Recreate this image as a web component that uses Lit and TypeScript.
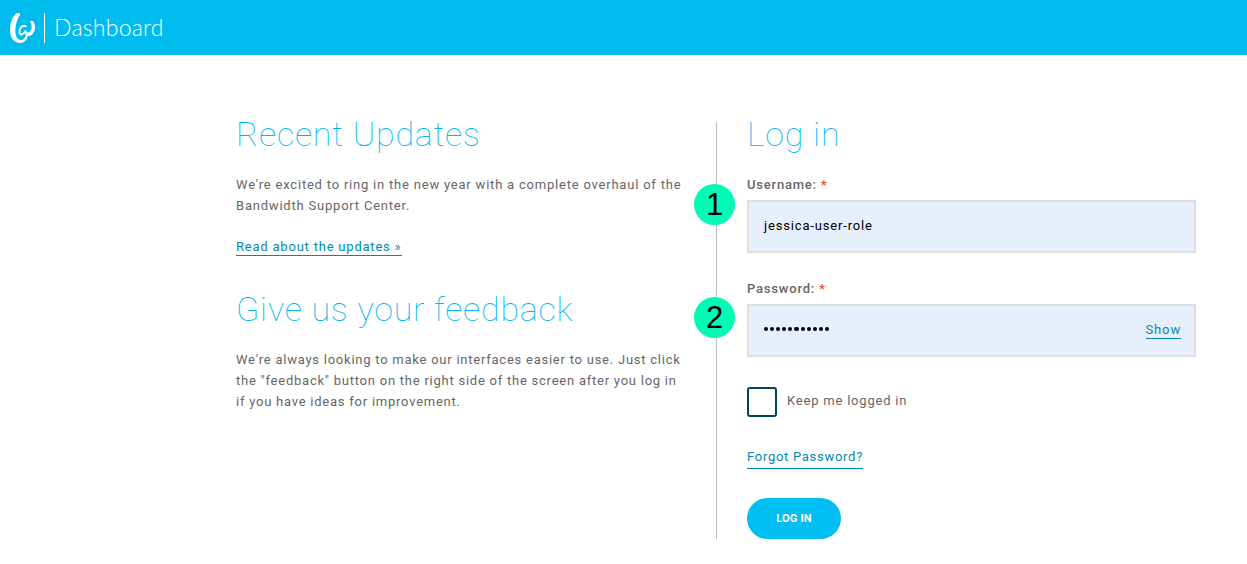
import { LitElement, html, css } from "lit";
import { customElement } from "lit/decorators.js";

@customElement("app-root")
export class AppRoot extends LitElement {
  static styles = css`
    :host {
      display: block;
      height: 564px;
      overflow: hidden;
      background: #fff;
      color: #666;
      font: 13px/21px Roboto, "Liberation Sans", sans-serif;
      letter-spacing: 0.79px;
    }
    * { box-sizing: border-box; }
    header {
      height: 55px;
      background: #00bcee;
      display: flex;
      align-items: center;
      color: #fff;
    }
    .logo { display: block; width: 44px; height: 55px; }
    .brand {
      height: 30px;
      border-left: 1px solid #fff;
      padding-left: 9px;
      font: 300 23px/29px Lato, sans-serif;
      letter-spacing: 0.25px;
    }
    main {
      display: grid;
      grid-template-columns: 480px 480px;
      margin: 67px 0 0 236px;
      height: 417px;
    }
    .login { border-left: 1px solid #bbb; padding-left: 30px; }
    h2 {
      margin: 0;
      height: 52px;
      font: 150 34px/25px Roboto, sans-serif;
      letter-spacing: 0.77px;
      color: #00b5ee;
      white-space: nowrap;
    }
    p { margin: 0 0 20px; white-space: nowrap; }
    p.tight { letter-spacing: 0.76px; }
    a {
      display: inline-block;
      color: #0089b0;
      border-bottom: 1px solid #0089b0;
      line-height: 17px;
    }
    .feedback { margin-top: 40px; }
    label { display: block; font-weight: 500; height: 26px; }
    .star { color: #e8542c; font-weight: 700; }
    .field {
      position: relative;
      width: 449px;
      height: 53px;
      border: 2px solid #dfdfdf;
      background: #e8effc;
      padding: 0 13px 2px 15px;
      display: flex;
      align-items: center;
      justify-content: space-between;
      color: #000;
      letter-spacing: 0.84px;
      margin-bottom: 25px;
    }
    .num {
      position: absolute;
      left: -55px;
      top: -18px;
      width: 41px;
      height: 41px;
      border-radius: 50%;
      background: #00fbb4;
      font: 31px/41px "Liberation Sans", sans-serif;
      letter-spacing: 0;
      text-align: center;
    }
    .num.second { top: -9px; }
    .dots { display: flex; gap: 2px; margin-bottom: 1px; }
    .dot { width: 4.1px; height: 4px; border-radius: 50%; background: #000; }
    .keep { display: flex; gap: 10px; margin-top: 30px; height: 30px; line-height: 27px; }
    .box { width: 30px; height: 30px; border: 2px solid #00465a; border-radius: 3px; }
    .forgot { display: block; width: 116px; margin-top: 29px; height: 23px; line-height: 21px; letter-spacing: 0.72px; white-space: nowrap; }
    button {
      display: block;
      width: 94px;
      height: 41px;
      margin-top: 29px;
      padding: 0;
      border: 0;
      border-radius: 21px;
      background: #00bdf2;
      color: #fff;
      font: 700 11px/41px Roboto, sans-serif;
      letter-spacing: 0.2px;
    }
  `;

  render() {
    return html`
      <header>
        <svg class="logo" viewBox="0 0 44 55" fill="none" stroke="#fff" stroke-linecap="round" stroke-linejoin="round">
          <path fill="#fff" stroke="none" d="M16 13.600C17.500 12.600 21 13 20 15C16.300 20 14.500 29 15.800 35C16.800 39.500 20.500 41 23 39.500C25.300 38 26 35.500 25.800 33L27.700 33C28 37 26.800 40.500 23.500 42.200C19 44.200 13.500 42 11.300 37C8.300 29.500 11 18 16 13.600Z"/>
          <path stroke-width="1.900" d="M25.800 26.300C22.500 24.500 18.800 28.500 19.500 32.500C20.200 35.500 23.500 35 25.200 31L26.700 34"/>
          <path fill="#fff" stroke="none" d="M29.800 21.200C31 20.300 33 20.600 33.900 22.200C36.500 27 34.500 34 30 35.700C28.300 36.300 26.500 35.500 26 34L26 31.500C27 33 28.800 32.800 30 31.500C32.300 29 32.300 25 29.800 21.200Z"/>
        </svg>
        <div class="brand">Dashboard</div>
      </header>
      <main>
        <section>
          <h2>Recent Updates</h2>
          <p>We're excited to ring in the new year with a complete overhaul of the<br />Bandwidth Support Center.</p>
          <a>Read about the updates »</a>
          <h2 class="feedback">Give us your feedback</h2>
          <p class="tight">We're always looking to make our interfaces easier to use. Just click<br />the "feedback" button on the right side of the screen after you log in<br />if you have ideas for improvement.</p>
        </section>
        <section class="login">
          <h2>Log in</h2>
          <label>Username: <span class="star">*</span></label>
          <div class="field"><span class="num">1</span><span>jessica-user-role</span></div>
          <label>Password: <span class="star">*</span></label>
          <div class="field">
            <span class="num second">2</span>
            <span class="dots">${Array.from({ length: 11 }, () => html`<i class="dot"></i>`)}</span>
            <a>Show</a>
          </div>
          <div class="keep"><span class="box"></span><span>Keep me logged in</span></div>
          <a class="forgot">Forgot Password?</a>
          <button>LOG IN</button>
        </section>
      </main>
    `;
  }
}
